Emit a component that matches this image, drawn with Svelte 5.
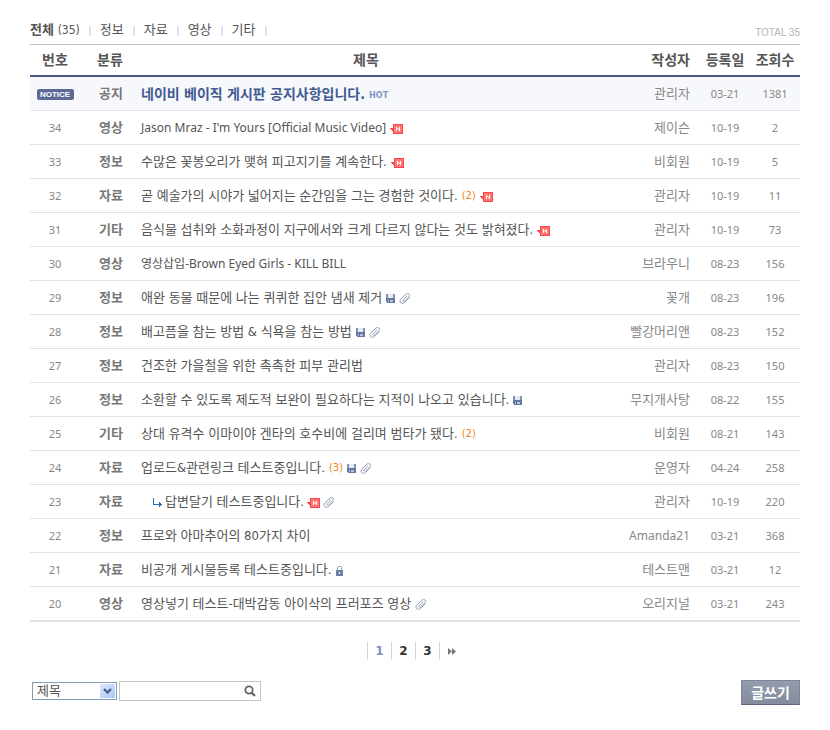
<script lang="ts">
  type Icon = 'new' | 'file' | 'clip' | 'lock';

  interface Post {
    no: number | null;
    category: string;
    title: string;
    author: string;
    date: string;
    views: number;
    comments?: number;
    icons?: Icon[];
    reply?: boolean;
    latin?: boolean;
  }

  const categories = ['정보', '자료', '영상', '기타'];
  const total = 35;

  const posts: Post[] = [
    { no: null, category: '공지', title: '네이비 베이직 게시판 공지사항입니다.', author: '관리자', date: '03-21', views: 1381 },
    { no: 34, category: '영상', title: "Jason Mraz - I'm Yours [Official Music Video]", author: '제이슨', date: '10-19', views: 2, icons: ['new'], latin: true },
    { no: 33, category: '정보', title: '수많은 꽃봉오리가 맺혀 피고지기를 계속한다.', author: '비회원', date: '10-19', views: 5, icons: ['new'] },
    { no: 32, category: '자료', title: '곧 예술가의 시야가 넓어지는 순간임을 그는 경험한 것이다.', author: '관리자', date: '10-19', views: 11, comments: 2, icons: ['new'] },
    { no: 31, category: '기타', title: '음식물 섭취와 소화과정이 지구에서와 크게 다르지 않다는 것도 밝혀졌다.', author: '관리자', date: '10-19', views: 73, icons: ['new'] },
    { no: 30, category: '영상', title: '영상삽입-Brown Eyed Girls - KILL BILL', author: '브라우니', date: '08-23', views: 156, latin: true },
    { no: 29, category: '정보', title: '애완 동물 때문에 나는 퀴퀴한 집안 냄새 제거', author: '꽃개', date: '08-23', views: 196, icons: ['file', 'clip'] },
    { no: 28, category: '정보', title: '배고픔을 참는 방법 & 식욕을 참는 방법', author: '빨강머리앤', date: '08-23', views: 152, icons: ['file', 'clip'] },
    { no: 27, category: '정보', title: '건조한 가을철을 위한 촉촉한 피부 관리법', author: '관리자', date: '08-23', views: 150 },
    { no: 26, category: '정보', title: '소환할 수 있도록 제도적 보완이 필요하다는 지적이 나오고 있습니다.', author: '무지개사탕', date: '08-22', views: 155, icons: ['file'] },
    { no: 25, category: '기타', title: '상대 유격수 이마이야 겐타의 호수비에 걸리며 범타가 됐다.', author: '비회원', date: '08-21', views: 143, comments: 2 },
    { no: 24, category: '자료', title: '업로드&관련링크 테스트중입니다.', author: '운영자', date: '04-24', views: 258, comments: 3, icons: ['file', 'clip'] },
    { no: 23, category: '자료', title: '답변달기 테스트중입니다.', author: '관리자', date: '10-19', views: 220, icons: ['new', 'clip'], reply: true },
    { no: 22, category: '정보', title: '프로와 아마추어의 80가지 차이', author: 'Amanda21', date: '03-21', views: 368 },
    { no: 21, category: '자료', title: '비공개 게시물등록 테스트중입니다.', author: '테스트맨', date: '03-21', views: 12, icons: ['lock'] },
    { no: 20, category: '영상', title: '영상넣기 테스트-대박감동 아이삭의 프러포즈 영상', author: '오리지널', date: '03-21', views: 243, icons: ['clip'] },
  ];

  let page = $state(1);
  let target = $state('title');
  let keyword = $state('');
</script>

{#snippet icon(name: Icon)}
  {#if name === 'new'}
    <svg class="icon" width="13" height="10" viewBox="0 0 13 10" shape-rendering="crispEdges" role="img" aria-label="새글">
      <path d="M0 4h3v3H2V6H1V5H0z" fill="#f44" />
      <rect x="3" width="10" height="10" fill="#f44" />
      <rect x="4" y="1" width="8" height="8" fill="#ff7676" />
      <path d="M6 3h1v1h1v1h1V3h1v4H9V6H8V5H7v2H6z" fill="#fff" />
    </svg>
  {:else if name === 'file'}
    <svg class="icon" width="9" height="9" viewBox="0 0 9 9" shape-rendering="crispEdges" role="img" aria-label="첨부파일">
      <path d="M0 0h9v9H1V8H0z" fill="#8593b5" />
      <path d="M0 4h9v5H1V8H0z" fill="#66779f" />
      <rect x="2" width="5" height="4" fill="#e4e9f2" />
      <rect x="2" y="6" width="5" height="2" fill="#b9c3d8" />
      <rect x="3" y="6" width="1" height="2" fill="#53658f" />
    </svg>
  {:else if name === 'clip'}
    <svg class="icon" width="12" height="11" viewBox="0 0 12 11" role="img" aria-label="링크">
      <g transform="rotate(-44 6 5.5)" fill="none" stroke="#929db5">
        <path d="M10 8H2.5A2.5 2.5 0 0 1 2.5 3H10A2 2 0 0 1 10 7H3.6A1.1 1.1 0 0 1 3.6 5H9.4" stroke-width="0.9" />
      </g>
    </svg>
  {:else}
    <svg class="icon" width="7" height="10" viewBox="0 0 7 10" shape-rendering="crispEdges" role="img" aria-label="비밀글">
      <path d="M1 4V1h1V0h3v1h1v3H5V1H2v3z" fill="#98a5bf" />
      <rect y="4" width="7" height="6" fill="#6f80a6" />
      <rect x="3" y="6" width="1" height="2" fill="#fff" />
    </svg>
  {/if}
{/snippet}

<main class="board">
  <div class="board-top">
    <ul class="tabs">
      <li><a href="#all"><strong>전체</strong> <span class="tab-count">({total})</span></a></li>
      {#each categories as category}
        <li><a href="#{category}">{category}</a></li>
      {/each}
    </ul>
    <span class="total">TOTAL {total}</span>
  </div>

  <table>
    <thead>
      <tr>
        <th class="no">번호</th>
        <th class="category">분류</th>
        <th class="subject">제목</th>
        <th class="author">작성자</th>
        <th class="date">등록일</th>
        <th class="views">조회수</th>
      </tr>
    </thead>
    <tbody>
      {#each posts as post}
        <tr class:notice={post.no === null}>
          <td class="no">
            {#if post.no === null}
              <span class="notice-badge">NOTICE</span>
            {:else}
              {post.no}
            {/if}
          </td>
          <td class="category">{post.category}</td>
          <td class="subject">
            <div class="subject-line" class:reply={post.reply}>
              {#if post.reply}
                <svg class="icon" width="9" height="9" viewBox="0 0 9 9" shape-rendering="crispEdges" aria-hidden="true">
                  <path d="M0 0h1v6h5V4h1v1h1v1h1v1H8v1H7v1H6V7H0z" fill="#1f6fb5" />
                </svg>
              {/if}
              <a href="#post" class:latin={post.latin}>{post.title}</a>
              {#if post.no === null}
                <span class="hot">HOT</span>
              {/if}
              {#if post.comments}
                <span class="comments">({post.comments})</span>
              {/if}
              {#each post.icons ?? [] as name}
                {@render icon(name)}
              {/each}
            </div>
          </td>
          <td class="author" class:latin={post.author === 'Amanda21'}>{post.author}</td>
          <td class="date">{post.date}</td>
          <td class="views">{post.views}</td>
        </tr>
      {/each}
    </tbody>
  </table>

  <nav class="pagination" aria-label="페이지">
    {#each [1, 2, 3] as n}
      <button class:current={n === page} onclick={() => (page = n)}>{n}</button>
    {/each}
    <button aria-label="다음" onclick={() => (page = 3)}>
      <svg width="8" height="7" viewBox="0 0 8 7" aria-hidden="true">
        <path d="M0 0 4 3.5 0 7zM4 0 8 3.5 4 7z" fill="#777" />
      </svg>
    </button>
  </nav>

  <div class="board-bottom">
    <form class="search" onsubmit={(e) => e.preventDefault()}>
      <div class="select-box">
        <select aria-label="검색 대상" bind:value={target}>
          <option value="title">제목</option>
          <option value="content">내용</option>
        </select>
        <svg class="select-arrow" width="15" height="14" viewBox="0 0 15 14" aria-hidden="true">
          <defs>
            <linearGradient id="arrow-bg" x1="0" y1="0" x2="1" y2="1">
              <stop offset="0" stop-color="#dce7fe" />
              <stop offset="1" stop-color="#adc5f8" />
            </linearGradient>
          </defs>
          <rect width="15" height="14" rx="1" fill="url(#arrow-bg)" />
          <path d="M4 5 7.5 8.5 11 5" fill="none" stroke="#4d6185" stroke-width="2.4" />
        </svg>
      </div>
      <div class="search-box">
        <input type="text" aria-label="검색어" bind:value={keyword} />
        <button aria-label="검색">
          <svg width="12" height="12" viewBox="0 0 12 12" aria-hidden="true">
            <circle cx="5" cy="5" r="3.7" fill="none" stroke="#666" stroke-width="1.8" />
            <path d="m7.6 7.6 3.4 3.4" stroke="#666" stroke-width="2.2" />
          </svg>
        </button>
      </div>
    </form>
    <button class="write">글쓰기</button>
  </div>
</main>

<style>
  :global(body) {
    background: #fff;
  }

  .board,
  .board * {
    box-sizing: border-box;
  }

  .board {
    padding: 20px 30px 25px;
    color: #555;
    font-family: 'DejaVu Sans Condensed', 'Noto Sans CJK KR', sans-serif;
    font-size: 13px;
    line-height: 20px;
  }

  a {
    color: inherit;
    text-decoration: none;
  }

  a:hover {
    text-decoration: underline;
  }

  button,
  select,
  input {
    margin: 0;
    font-family: inherit;
    font-size: 13px;
    color: inherit;
  }

  button {
    padding: 0;
    border: 0;
    background: none;
    cursor: pointer;
  }

  .board-top {
    display: flex;
    justify-content: space-between;
    align-items: flex-start;
    height: 24px;
  }

  .tabs {
    display: flex;
    margin: 0;
    padding: 0;
    list-style: none;
  }

  .tabs li {
    display: flex;
    align-items: center;
  }

  .tabs li::after {
    content: '';
    width: 2px;
    height: 10px;
    margin: 2px 9px 0;
    background: #dfe1f7;
  }

  .tab-count {
    font-size: 12px;
  }

  .total {
    padding-top: 3px;
    color: #b4b4b4;
    font-family: 'Liberation Sans', sans-serif;
    font-size: 10px;
  }

  table {
    width: 100%;
    border-spacing: 0;
    table-layout: fixed;
    border-bottom: 1px solid #e2e2e2;
  }

  th {
    height: 33px;
    padding: 0;
    border-top: 1px solid #c4c4c4;
    border-bottom: 2px solid #485886;
    font-size: 14px;
    font-weight: bold;
  }

  td {
    height: 34px;
    padding: 0;
    border-bottom: 1px solid #e2e2e2;
    color: #888;
    text-align: center;
  }

  .no,
  .date,
  .views {
    width: 50px;
  }

  th.no,
  th.date,
  th.views {
    white-space: nowrap;
  }

  td.no,
  td.date,
  td.views {
    padding-top: 1px;
    font-family: 'Noto Sans', sans-serif;
    font-size: 11px;
  }

  .category {
    width: 60px;
  }

  td.category {
    padding-left: 2px;
    color: #777;
    font-weight: bold;
  }

  td.subject {
    color: #555;
  }

  .author {
    width: 108px;
    padding-right: 10px;
    text-align: right;
  }

  td.latin,
  a.latin {
    font-family: 'Noto Sans', 'Noto Sans CJK KR', sans-serif;
    font-size: 12px;
  }

  .subject-line {
    display: flex;
    align-items: center;
    gap: 4px;
    padding-left: 1px;
    white-space: nowrap;
  }

  .reply {
    gap: 3px;
    padding-left: 13px;
  }

  .icon {
    flex: none;
    margin-top: 2px;
  }

  .comments {
    padding-top: 1px;
    color: #f58220;
    font-size: 11px;
  }

  .notice td {
    background: #f7f8fb;
  }

  .notice .subject a {
    color: #415a92;
    font-size: 14px;
    font-weight: bold;
  }

  .notice-badge {
    display: block;
    width: 37px;
    margin: 0 auto;
    border-radius: 2px;
    background: #5c6a98;
    color: #fff;
    font-family: 'Liberation Sans', sans-serif;
    font-size: 8px;
    font-weight: bold;
    line-height: 11px;
  }

  .hot {
    padding-top: 2px;
    color: #8099c8;
    font-family: 'Liberation Sans Narrow', 'DejaVu Sans Condensed', sans-serif;
    font-size: 9px;
    font-weight: bold;
  }

  .pagination {
    display: flex;
    justify-content: center;
    margin-top: 20px;
  }

  .pagination button {
    display: flex;
    align-items: center;
    justify-content: center;
    width: 24px;
    height: 18px;
    border-left: 1px solid #d5d5d5;
    color: #333;
    font-family: 'DejaVu Sans', sans-serif;
    font-size: 12px;
    font-weight: bold;
  }

  .pagination .current {
    color: #7b90c8;
  }

  .board-bottom {
    display: flex;
    justify-content: space-between;
    align-items: flex-start;
    margin-top: 20px;
  }

  .search {
    display: flex;
    align-items: center;
    gap: 2px;
    padding: 1px 2px;
  }

  .select-box {
    position: relative;
    width: 85px;
    height: 18px;
  }

  select {
    display: block;
    width: 100%;
    height: 100%;
    padding: 0 20px 0 4px;
    border: 1px solid #7f9db9;
    border-radius: 0;
    background: #fff;
    appearance: none;
    line-height: 16px;
  }

  .select-arrow {
    position: absolute;
    top: 2px;
    right: 2px;
    pointer-events: none;
  }

  .search-box {
    display: flex;
    width: 142px;
    height: 20px;
    border: 1px solid #c4c4c4;
  }

  .search-box input {
    flex: 1;
    min-width: 0;
    padding: 0 4px;
    border: 0;
    outline: none;
    background: none;
  }

  .search-box button {
    display: flex;
    align-items: center;
    justify-content: center;
    width: 20px;
  }

  .write {
    width: 59px;
    height: 25px;
    border: 1px solid #7c8497;
    border-bottom-color: #5d6579;
    background: linear-gradient(#949cac, #838b9d);
    color: #fff;
    font-size: 14px;
    font-weight: bold;
    line-height: 20px;
  }
</style>
